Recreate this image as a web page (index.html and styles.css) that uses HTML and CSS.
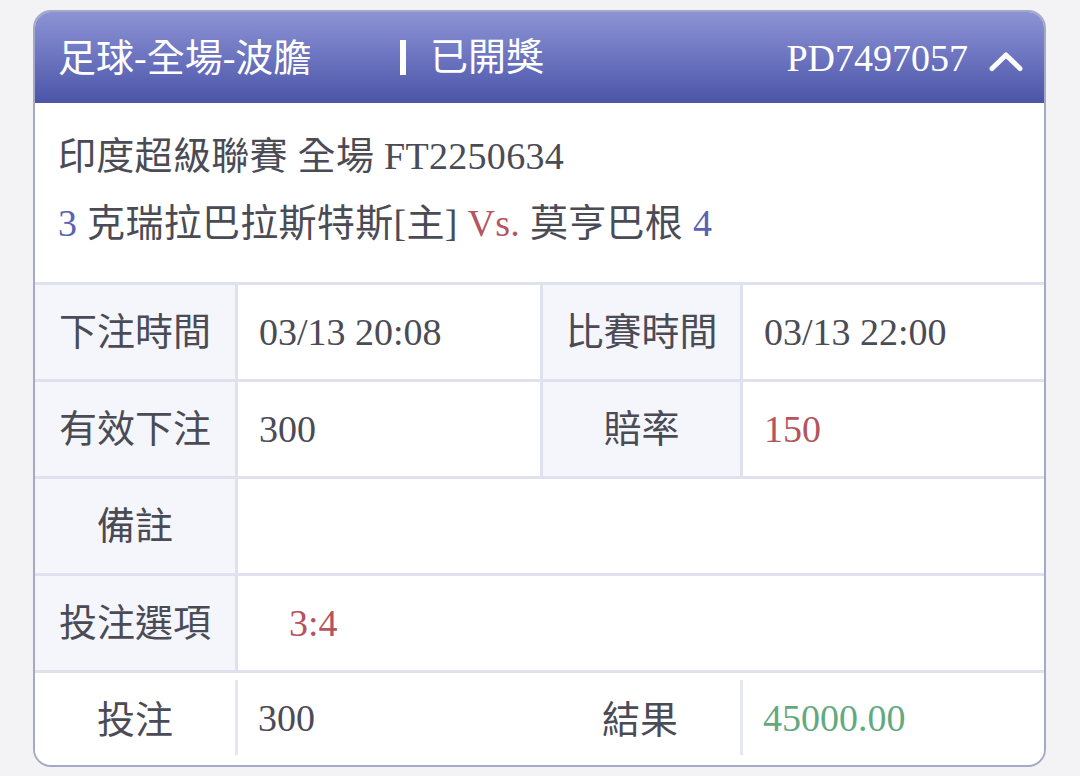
FILE: index.html
```html
<!DOCTYPE html>
<html lang="zh-Hant">
<head>
<meta charset="utf-8">
<title>注單</title>
<link rel="stylesheet" href="styles.css">
</head>
<body>
<div class="page">
  <div class="card">
    <div class="card-head">
      <div class="head-title">足球-全場-波膽</div>
      <div class="head-status">已開獎</div>
      <div class="head-id">PD7497057</div>
      <svg class="head-chevron" viewBox="0 0 34 22" width="34" height="22" aria-hidden="true">
        <polyline points="3,18.5 17,5 31,18.5" fill="none" stroke="#fff" stroke-width="5" stroke-linecap="round" stroke-linejoin="round"/>
      </svg>
    </div>
    <div class="match">
      <div class="match-line">印度超級聯賽 全場 FT2250634</div>
      <div class="match-line"><span class="num">3</span> 克瑞拉巴拉斯特斯[主] <span class="vs">Vs.</span> 莫亨巴根 <span class="num">4</span></div>
    </div>
    <div class="details">
      <div class="label">下注時間</div>
      <div class="value">03/13 20:08</div>
      <div class="label">比賽時間</div>
      <div class="value">03/13 22:00</div>

      <div class="label">有效下注</div>
      <div class="value">300</div>
      <div class="label">賠率</div>
      <div class="value red">150</div>

      <div class="label">備註</div>
      <div class="value wide"></div>

      <div class="label">投注選項</div>
      <div class="value wide pick red">3:4</div>

      <div class="summary">
        <div class="sum-label">投注</div>
        <div class="sum-value">300</div>
        <div class="sum-label">結果</div>
        <div class="sum-value green">45000.00</div>
      </div>
    </div>
  </div>
</div>
</body>
</html>
```

FILE: styles.css
```css
html, body {
  margin: 0;
  padding: 0;
}

body {
  background: #f3f3f5;
  font-family: "Liberation Serif", "Noto Sans CJK TC", serif;
  color: #4a4b55;
  font-size: 38px;
}

.page {
  padding: 10px 0 0 33px;
}

.card {
  width: 1013px;
  box-sizing: border-box;
  border: 2px solid #a5a8c7;
  border-radius: 18px;
  overflow: hidden;
  background: #fff;
}

.card-head {
  height: 91px;
  display: flex;
  align-items: center;
  padding: 0 21px 0 23px;
  background: linear-gradient(180deg, #8c93d4 0%, #6c74c0 50%, #4b55a7 100%);
  color: #fff;
}

.head-title {
  width: 342px;
  flex: none;
  white-space: nowrap;
  padding-bottom: 6px;
}

.head-status {
  border-left: 6px solid #fff;
  padding-left: 24px;
  line-height: 35px;
  height: 35px;
  display: flex;
  align-items: center;
}

.head-id {
  margin-left: auto;
}

.head-chevron {
  display: block;
  margin-left: 21px;
  margin-top: 6px;
}

.match {
  padding: 20px 23px 25px;
  line-height: 67px;
  white-space: nowrap;
  letter-spacing: 0.3px;
}

.num {
  color: #5a63b3;
}

.vs {
  color: #b5555f;
}

.details {
  display: grid;
  grid-template-columns: 200px 302px 197px 1fr;
  grid-template-rows: repeat(4, 94px) 92px;
  gap: 3px;
  background: #dfe1ee;
  border-top: 3px solid #dfe1ee;
}

.label {
  background: #f5f6fb;
  display: flex;
  align-items: center;
  justify-content: center;
  padding-bottom: 7px;
}

.value {
  background: #fff;
  display: flex;
  align-items: center;
  padding-left: 21px;
}

.value.wide {
  grid-column: span 3;
}

.value.pick {
  padding-left: 51px;
}

.red {
  color: #b5535e;
}

.green {
  color: #63a980;
}

.summary {
  grid-column: 1 / -1;
  background: #fff;
  display: grid;
  grid-template-columns: 200px 305px 200px 1fr;
}

.sum-label {
  display: flex;
  align-items: center;
  justify-content: center;
  padding-bottom: 6px;
}

.sum-value {
  display: flex;
  align-items: center;
  padding-left: 20px;
  border-left: 3px solid #e4e6f0;
  margin: 7px 0 10px;
}
```
